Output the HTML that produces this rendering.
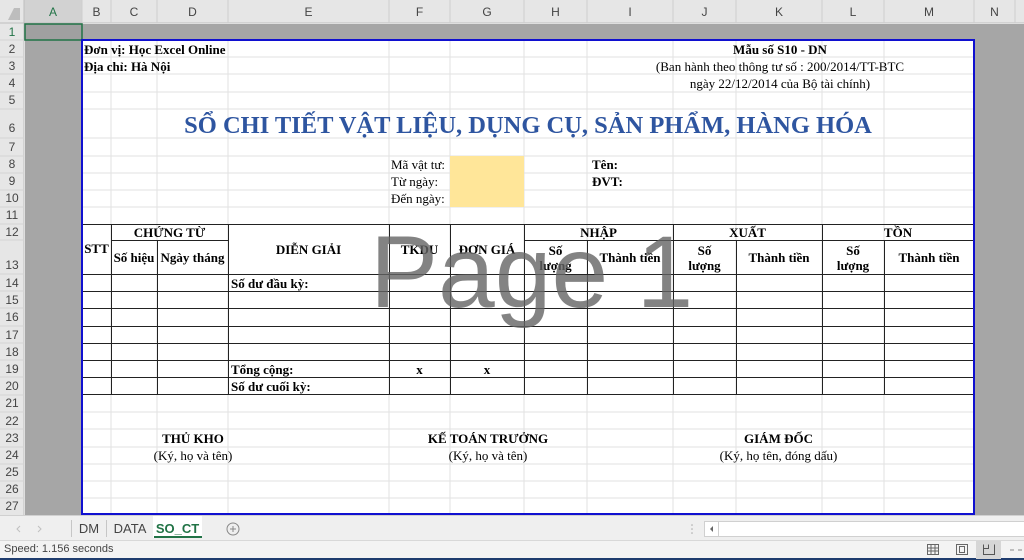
<!DOCTYPE html>
<html><head><meta charset="utf-8"><style>
*{margin:0;padding:0;box-sizing:border-box}
body{width:1024px;height:560px;overflow:hidden;background:#fff;position:relative;font-family:"Liberation Serif",serif}
.t{position:absolute;font-size:13px;color:#000;white-space:nowrap;line-height:15px}
.b{font-weight:bold}
.c{text-align:center}
.h{position:absolute;font-family:"Liberation Sans",sans-serif;font-size:12px;color:#444;text-align:center}
</style></head><body>
<svg width="1024" height="560" style="position:absolute;left:0;top:0">
<rect x="0" y="0" width="1024" height="23" fill="#e6e6e6"/>
<rect x="0" y="0" width="24" height="515" fill="#e6e6e6"/>
<rect x="24" y="0" width="58" height="23" fill="#d2d2d2"/>
<line x1="0" y1="23" x2="1024" y2="23" stroke="#bdbdbd"/>
<line x1="24" y1="0" x2="24" y2="515" stroke="#bdbdbd"/>
<g stroke="#cfcfcf">
<line x1="82" y1="0" x2="82" y2="23"/><line x1="111" y1="0" x2="111" y2="23"/><line x1="157" y1="0" x2="157" y2="23"/><line x1="228" y1="0" x2="228" y2="23"/><line x1="389" y1="0" x2="389" y2="23"/><line x1="450" y1="0" x2="450" y2="23"/><line x1="524" y1="0" x2="524" y2="23"/><line x1="587" y1="0" x2="587" y2="23"/><line x1="673" y1="0" x2="673" y2="23"/><line x1="736" y1="0" x2="736" y2="23"/><line x1="822" y1="0" x2="822" y2="23"/><line x1="884" y1="0" x2="884" y2="23"/><line x1="974" y1="0" x2="974" y2="23"/><line x1="1015" y1="0" x2="1015" y2="23"/>
</g>
<path d="M14 8 L20 8 L20 20 L8 20 Z" fill="#bdbdbd"/>
<rect x="25" y="24" width="999" height="491" fill="#a6a6a6"/>
<rect x="82" y="40" width="892" height="475" fill="#fff"/>
<rect x="25" y="24" width="57" height="16" fill="#a0a0a0" stroke="#217346" stroke-width="1.5"/>
<g stroke="#e2e2e2">
<line x1="111" y1="40" x2="111" y2="515"/><line x1="157" y1="40" x2="157" y2="515"/><line x1="228" y1="40" x2="228" y2="515"/><line x1="389" y1="40" x2="389" y2="515"/><line x1="450" y1="40" x2="450" y2="515"/><line x1="524" y1="40" x2="524" y2="515"/><line x1="587" y1="40" x2="587" y2="515"/><line x1="673" y1="40" x2="673" y2="515"/><line x1="736" y1="40" x2="736" y2="515"/><line x1="822" y1="40" x2="822" y2="515"/><line x1="884" y1="40" x2="884" y2="515"/>
<line x1="82" y1="57" x2="974" y2="57"/><line x1="82" y1="74" x2="974" y2="74"/><line x1="82" y1="92" x2="974" y2="92"/><line x1="82" y1="109" x2="974" y2="109"/><line x1="82" y1="138" x2="974" y2="138"/><line x1="82" y1="156" x2="974" y2="156"/><line x1="82" y1="173" x2="974" y2="173"/><line x1="82" y1="190" x2="974" y2="190"/><line x1="82" y1="207" x2="974" y2="207"/><line x1="82" y1="412" x2="974" y2="412"/><line x1="82" y1="429" x2="974" y2="429"/><line x1="82" y1="447" x2="974" y2="447"/><line x1="82" y1="464" x2="974" y2="464"/><line x1="82" y1="481" x2="974" y2="481"/><line x1="82" y1="498" x2="974" y2="498"/>
</g>
<g stroke="#d4d4d4">
<line x1="0" y1="40" x2="24" y2="40"/><line x1="0" y1="57" x2="24" y2="57"/><line x1="0" y1="74" x2="24" y2="74"/><line x1="0" y1="92" x2="24" y2="92"/><line x1="0" y1="109" x2="24" y2="109"/><line x1="0" y1="138" x2="24" y2="138"/><line x1="0" y1="156" x2="24" y2="156"/><line x1="0" y1="173" x2="24" y2="173"/><line x1="0" y1="190" x2="24" y2="190"/><line x1="0" y1="207" x2="24" y2="207"/><line x1="0" y1="224" x2="24" y2="224"/><line x1="0" y1="240" x2="24" y2="240"/><line x1="0" y1="274" x2="24" y2="274"/><line x1="0" y1="291" x2="24" y2="291"/><line x1="0" y1="308" x2="24" y2="308"/><line x1="0" y1="326" x2="24" y2="326"/><line x1="0" y1="343" x2="24" y2="343"/><line x1="0" y1="360" x2="24" y2="360"/><line x1="0" y1="377" x2="24" y2="377"/><line x1="0" y1="395" x2="24" y2="395"/><line x1="0" y1="412" x2="24" y2="412"/><line x1="0" y1="429" x2="24" y2="429"/><line x1="0" y1="447" x2="24" y2="447"/><line x1="0" y1="464" x2="24" y2="464"/><line x1="0" y1="481" x2="24" y2="481"/><line x1="0" y1="498" x2="24" y2="498"/>
</g>
<rect x="450" y="156" width="74" height="51" fill="#ffe699"/>
<g stroke="#222" stroke-width="1">
<rect x="82.5" y="224.5" width="891" height="170" fill="none"/>
<line x1="111.5" y1="224" x2="111.5" y2="395"/><line x1="228.5" y1="224" x2="228.5" y2="395"/><line x1="389.5" y1="224" x2="389.5" y2="395"/><line x1="450.5" y1="224" x2="450.5" y2="395"/><line x1="524.5" y1="224" x2="524.5" y2="395"/><line x1="673.5" y1="224" x2="673.5" y2="395"/><line x1="822.5" y1="224" x2="822.5" y2="395"/>
<line x1="157.5" y1="240" x2="157.5" y2="395"/><line x1="587.5" y1="240" x2="587.5" y2="395"/><line x1="736.5" y1="240" x2="736.5" y2="395"/><line x1="884.5" y1="240" x2="884.5" y2="395"/>
<line x1="111" y1="240.5" x2="228" y2="240.5"/><line x1="524" y1="240.5" x2="974" y2="240.5"/>
<line x1="82" y1="274.5" x2="974" y2="274.5"/><line x1="82" y1="291.5" x2="974" y2="291.5"/><line x1="82" y1="308.5" x2="974" y2="308.5"/><line x1="82" y1="326.5" x2="974" y2="326.5"/><line x1="82" y1="343.5" x2="974" y2="343.5"/><line x1="82" y1="360.5" x2="974" y2="360.5"/><line x1="82" y1="377.5" x2="974" y2="377.5"/>
</g>
<rect x="82" y="40" width="892" height="474" fill="none" stroke="#1010d0" stroke-width="2"/>
<rect x="0" y="515" width="1024" height="25" fill="#efefef"/>
<line x1="0" y1="515.5" x2="1024" y2="515.5" stroke="#d0d0d0"/>
<line x1="71.5" y1="520" x2="71.5" y2="537" stroke="#c6c6c6"/><line x1="106.5" y1="520" x2="106.5" y2="537" stroke="#c6c6c6"/>
<rect x="153" y="516" width="49" height="22" fill="#fff"/>
<line x1="154" y1="537" x2="202" y2="537" stroke="#217346" stroke-width="2"/>
<circle cx="233" cy="529" r="6" fill="none" stroke="#888"/>
<path d="M230 529h6M233 526v6" stroke="#888"/>
<path d="M20 526l-3 3 3 3M38 526l3 3-3 3" fill="none" stroke="#c0c0c0"/>
<g fill="#aaa"><circle cx="692" cy="525" r="0.8"/><circle cx="692" cy="529" r="0.8"/><circle cx="692" cy="533" r="0.8"/></g>
<rect x="704.5" y="521.5" width="320" height="15" fill="#fff" stroke="#d0d0d0"/>
<line x1="718.5" y1="522" x2="718.5" y2="536" stroke="#d0d0d0"/>
<path d="M713 526v6l-3-3z" fill="#666"/>
<rect x="0" y="540" width="1024" height="20" fill="#f3f3f3"/>
<line x1="0" y1="540.5" x2="1024" y2="540.5" stroke="#d8d8d8"/>
<line x1="0" y1="559" x2="1024" y2="559" stroke="#1e3c6e" stroke-width="2"/>
<g fill="none" stroke="#666">
<rect x="927.5" y="544.5" width="11" height="10"/><path d="M931 545v9M935 545v9M928 548h10M928 551h10"/>
<rect x="956.5" y="544.5" width="11" height="10"/><rect x="959.5" y="546.5" width="5" height="6"/>
</g>
<rect x="976" y="541" width="25" height="18" fill="#d6d6d6"/>
<path d="M983.5 544.5v10h11v-10M988.5 544.5v4h-5" fill="none" stroke="#555"/>
<path d="M1010 550h4M1018 550h4" stroke="#888"/>
</svg>
<div class="h" style="left:24px;top:5px;width:58px;color:#217346">A</div>
<div class="h" style="left:82px;top:5px;width:29px">B</div>
<div class="h" style="left:111px;top:5px;width:46px">C</div>
<div class="h" style="left:157px;top:5px;width:71px">D</div>
<div class="h" style="left:228px;top:5px;width:161px">E</div>
<div class="h" style="left:389px;top:5px;width:61px">F</div>
<div class="h" style="left:450px;top:5px;width:74px">G</div>
<div class="h" style="left:524px;top:5px;width:63px">H</div>
<div class="h" style="left:587px;top:5px;width:86px">I</div>
<div class="h" style="left:673px;top:5px;width:63px">J</div>
<div class="h" style="left:736px;top:5px;width:86px">K</div>
<div class="h" style="left:822px;top:5px;width:62px">L</div>
<div class="h" style="left:884px;top:5px;width:90px">M</div>
<div class="h" style="left:974px;top:5px;width:41px">N</div>
<div class="h" style="left:0;top:25px;width:24px;color:#217346">1</div>
<div class="h" style="left:0;top:42px;width:24px">2</div>
<div class="h" style="left:0;top:59px;width:24px">3</div>
<div class="h" style="left:0;top:76px;width:24px">4</div>
<div class="h" style="left:0;top:93px;width:24px">5</div>
<div class="h" style="left:0;top:121px;width:24px">6</div>
<div class="h" style="left:0;top:140px;width:24px">7</div>
<div class="h" style="left:0;top:157px;width:24px">8</div>
<div class="h" style="left:0;top:174px;width:24px">9</div>
<div class="h" style="left:0;top:191px;width:24px">10</div>
<div class="h" style="left:0;top:225px;width:24px">12</div>
<div class="h" style="left:0;top:208px;width:24px">11</div>
<div class="h" style="left:0;top:258px;width:24px">13</div>
<div class="h" style="left:0;top:276px;width:24px">14</div>
<div class="h" style="left:0;top:293px;width:24px">15</div>
<div class="h" style="left:0;top:310px;width:24px">16</div>
<div class="h" style="left:0;top:328px;width:24px">17</div>
<div class="h" style="left:0;top:345px;width:24px">18</div>
<div class="h" style="left:0;top:362px;width:24px">19</div>
<div class="h" style="left:0;top:379px;width:24px">20</div>
<div class="h" style="left:0;top:396px;width:24px">21</div>
<div class="h" style="left:0;top:414px;width:24px">22</div>
<div class="h" style="left:0;top:431px;width:24px">23</div>
<div class="h" style="left:0;top:448px;width:24px">24</div>
<div class="h" style="left:0;top:465px;width:24px">25</div>
<div class="h" style="left:0;top:482px;width:24px">26</div>
<div class="h" style="left:0;top:499px;width:24px">27</div>
<div class="t b" style="left:84px;top:42px">Đơn vị: Học Excel Online</div>
<div class="t b" style="left:84px;top:59px">Địa chỉ: Hà Nội</div>
<div class="t b c" style="left:640px;top:42px;width:280px">Mẫu số S10 - DN</div>
<div class="t c" style="left:640px;top:59px;width:280px">(Ban hành theo thông tư số : 200/2014/TT-BTC</div>
<div class="t c" style="left:640px;top:76px;width:280px">ngày 22/12/2014 của Bộ tài chính)</div>
<div class="t b c" style="left:82px;top:112px;width:892px;font-size:24.5px;line-height:27px;color:#2e55a0">SỔ CHI TIẾT VẬT LIỆU, DỤNG CỤ, SẢN PHẨM, HÀNG HÓA</div>
<div class="t" style="left:391px;top:157px">Mã vật tư:</div>
<div class="t" style="left:391px;top:174px">Từ ngày:</div>
<div class="t" style="left:391px;top:191px">Đến ngày:</div>
<div class="t b" style="left:592px;top:157px">Tên:</div>
<div class="t b" style="left:592px;top:174px">ĐVT:</div>
<div class="t b c" style="left:82px;top:241px;width:29px">STT</div>
<div class="t b c" style="left:111px;top:225px;width:117px">CHỨNG TỪ</div>
<div class="t b c" style="left:111px;top:250px;width:46px">Số hiệu</div>
<div class="t b c" style="left:157px;top:250px;width:71px">Ngày tháng</div>
<div class="t b c" style="left:228px;top:242px;width:161px">DIỄN GIẢI</div>
<div class="t b c" style="left:389px;top:242px;width:61px">TKDU</div>
<div class="t b c" style="left:450px;top:242px;width:74px">ĐƠN GIÁ</div>
<div class="t b c" style="left:524px;top:225px;width:149px">NHẬP</div>
<div class="t b c" style="left:673px;top:225px;width:149px">XUẤT</div>
<div class="t b c" style="left:822px;top:225px;width:152px">TỒN</div>
<div class="t b c" style="left:524px;top:243px;width:63px">Số<br>lượng</div>
<div class="t b c" style="left:673px;top:243px;width:63px">Số<br>lượng</div>
<div class="t b c" style="left:822px;top:243px;width:62px">Số<br>lượng</div>
<div class="t b c" style="left:587px;top:250px;width:86px">Thành tiền</div>
<div class="t b c" style="left:736px;top:250px;width:86px">Thành tiền</div>
<div class="t b c" style="left:884px;top:250px;width:90px">Thành tiền</div>
<div class="t b" style="left:231px;top:276px">Số dư đầu kỳ:</div>
<div class="t b" style="left:231px;top:362px">Tổng cộng:</div>
<div class="t b" style="left:231px;top:379px">Số dư cuối kỳ:</div>
<div class="t b c" style="left:389px;top:362px;width:61px">x</div>
<div class="t b c" style="left:450px;top:362px;width:74px">x</div>
<div class="t b c" style="left:111px;top:431px;width:164px">THỦ KHO</div>
<div class="t c" style="left:111px;top:448px;width:164px">(Ký, họ và tên)</div>
<div class="t b c" style="left:389px;top:431px;width:198px">KẾ TOÁN TRƯỞNG</div>
<div class="t c" style="left:389px;top:448px;width:198px">(Ký, họ và tên)</div>
<div class="t b c" style="left:673px;top:431px;width:211px">GIÁM ĐỐC</div>
<div class="t c" style="left:673px;top:448px;width:211px">(Ký, họ tên, đóng dấu)</div>
<div style="position:absolute;left:370px;top:214px;font-family:'Liberation Sans',sans-serif;font-size:102px;line-height:116px;color:rgba(100,100,100,0.8);white-space:nowrap">Page 1</div>
<div class="h" style="left:72px;top:521px;width:34px;font-size:13px">DM</div>
<div class="h" style="left:107px;top:521px;width:46px;font-size:13px">DATA</div>
<div class="h" style="left:153px;top:521px;width:49px;font-size:13px;color:#217346;font-weight:bold">SO_CT</div>
<div class="h" style="left:4px;top:543px;font-size:11px;text-align:left">Speed: 1.156 seconds</div>
</body></html>
